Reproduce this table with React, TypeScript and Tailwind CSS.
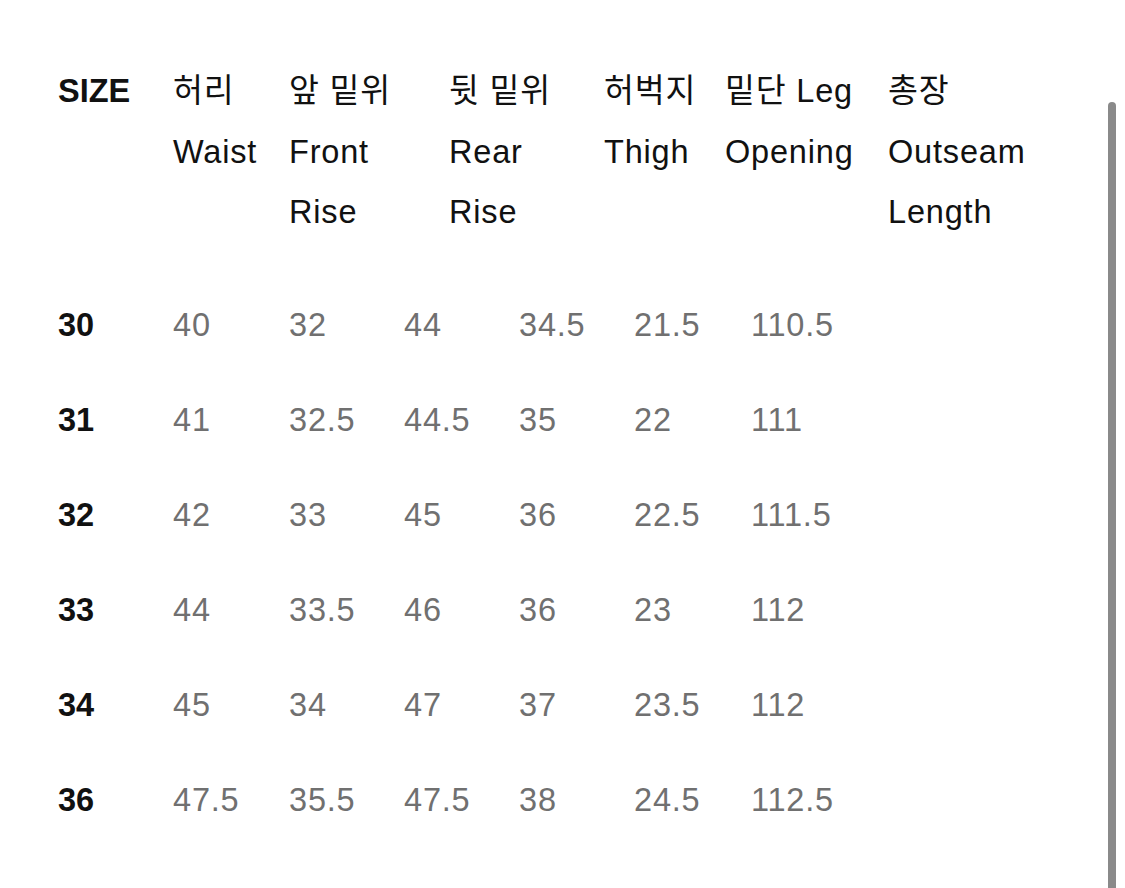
const headers: { ko: string; en: string[] }[] = [
  { ko: '허리', en: ['Waist'] },
  { ko: '앞 밑위', en: ['Front', 'Rise'] },
  { ko: '뒷 밑위', en: ['Rear', 'Rise'] },
  { ko: '허벅지', en: ['Thigh'] },
  { ko: '밑단 Leg', en: ['Opening'] },
  { ko: '총장', en: ['Outseam', 'Length'] },
];

const rows: string[][] = [
  ['30', '40', '32', '44', '34.5', '21.5', '110.5'],
  ['31', '41', '32.5', '44.5', '35', '22', '111'],
  ['32', '42', '33', '45', '36', '22.5', '111.5'],
  ['33', '44', '33.5', '46', '36', '23', '112'],
  ['34', '45', '34', '47', '37', '23.5', '112'],
  ['36', '47.5', '35.5', '47.5', '38', '24.5', '112.5'],
];

export default function App() {
  return (
    <div
      className="relative h-[888px] w-[1125px] overflow-hidden bg-white text-[32.5px] tracking-[0.025em] text-[#111]"
      style={{ fontFamily: '"Liberation Sans", "Noto Sans CJK KR", sans-serif' }}
    >
      <div className="pl-[58px] pt-[61px]">
        {/* Header */}
        <div className="grid grid-cols-[115px_116px_160px_155px_121px_163px_auto] leading-[60.5px]">
          <div className="font-bold tracking-normal">SIZE</div>
          {headers.map((h) => (
            <div key={h.ko} className="flex flex-col">
              <span>{h.ko}</span>
              {h.en.map((line) => (
                <span key={line}>{line}</span>
              ))}
            </div>
          ))}
        </div>

        {/* Body */}
        <div className="mt-[35px]">
          {rows.map((row) => (
            <div key={row[0]} className="grid h-[95px] grid-cols-[115px_116px_115px_115px_115px_117px_auto] items-center">
              {row.map((cell, i) => (
                <span key={i} className={i === 0 ? 'font-bold tracking-normal text-[#111]' : 'text-[#707070]'}>
                  {cell}
                </span>
              ))}
            </div>
          ))}
        </div>
      </div>

      {/* scrollbar thumb */}
      <div className="absolute left-[1108px] top-[102px] h-[800px] w-[8px] rounded-full bg-[#8a8a8a]" />
    </div>
  );
}
